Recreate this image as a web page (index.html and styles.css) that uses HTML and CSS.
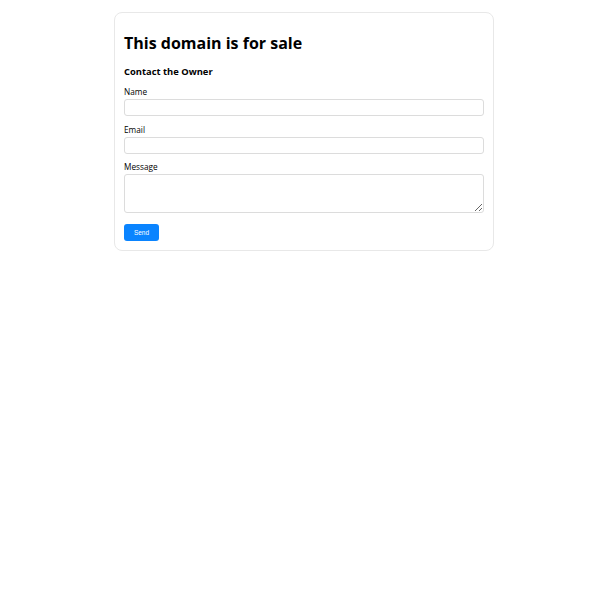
FILE: index.html
```html
<!DOCTYPE html>
<html lang="en">
<head>
    <meta charset="UTF-8">
    <meta name="viewport" content="width=device-width, initial-scale=1.0">
    <title>This domain is for sale</title>
    <link rel="stylesheet" href="styles.css">
</head>
<body>
    <div class="page">
        <div class="card">
            <h1 class="title">This domain is for sale</h1>
            <h2 class="subtitle">Contact the Owner</h2>

            <form class="contact-form">
                <div class="field">
                    <label for="name">Name</label>
                    <input type="text" id="name" name="name">
                </div>
                <div class="field">
                    <label for="email">Email</label>
                    <input type="email" id="email" name="email">
                </div>
                <div class="field">
                    <label for="message">Message</label>
                    <textarea id="message" name="message"></textarea>
                </div>
                <button type="submit" class="send-button">Send</button>
            </form>
        </div>
    </div>
</body>
</html>
```

FILE: styles.css
```css
* {
    margin: 0;
    padding: 0;
    box-sizing: border-box;
}

body {
    background-color: #fff;
    color: #000;
    font-family: 'Open Sans', 'Noto Sans', sans-serif;
}

.page {
    padding: 12px 0 0 8px;
}

.card {
    width: 380px;
    margin: 0 auto;
    padding: 9px;
    border: 1px solid #e8e8e8;
    border-radius: 8px;
}

.title {
    font-size: 16px;
    line-height: 24px;
    font-weight: 700;
    margin: 9px 0 10px;
}

.subtitle {
    font-size: 9.4px;
    line-height: 14px;
    font-weight: 700;
    margin-bottom: 7px;
}

.field {
    margin-bottom: 7.5px;
}

.field label {
    display: block;
    font-size: 8.25px;
    line-height: 11px;
    margin-bottom: 2px;
}

.field input,
.field textarea {
    display: block;
    width: 100%;
    height: 17px;
    border: 1px solid #dcdcdc;
    border-radius: 3px;
    font-family: inherit;
    font-size: 8px;
    padding: 2px 4px;
    background: #fff;
}

.field textarea {
    height: 39px;
    resize: vertical;
}

.send-button {
    display: block;
    width: 35px;
    height: 17px;
    margin-top: 11px;
    background-color: #0a84ff;
    color: #fff;
    border: none;
    border-radius: 3px;
    font-family: 'Liberation Sans', Arial, sans-serif;
    font-size: 6.5px;
    cursor: pointer;
}
```
